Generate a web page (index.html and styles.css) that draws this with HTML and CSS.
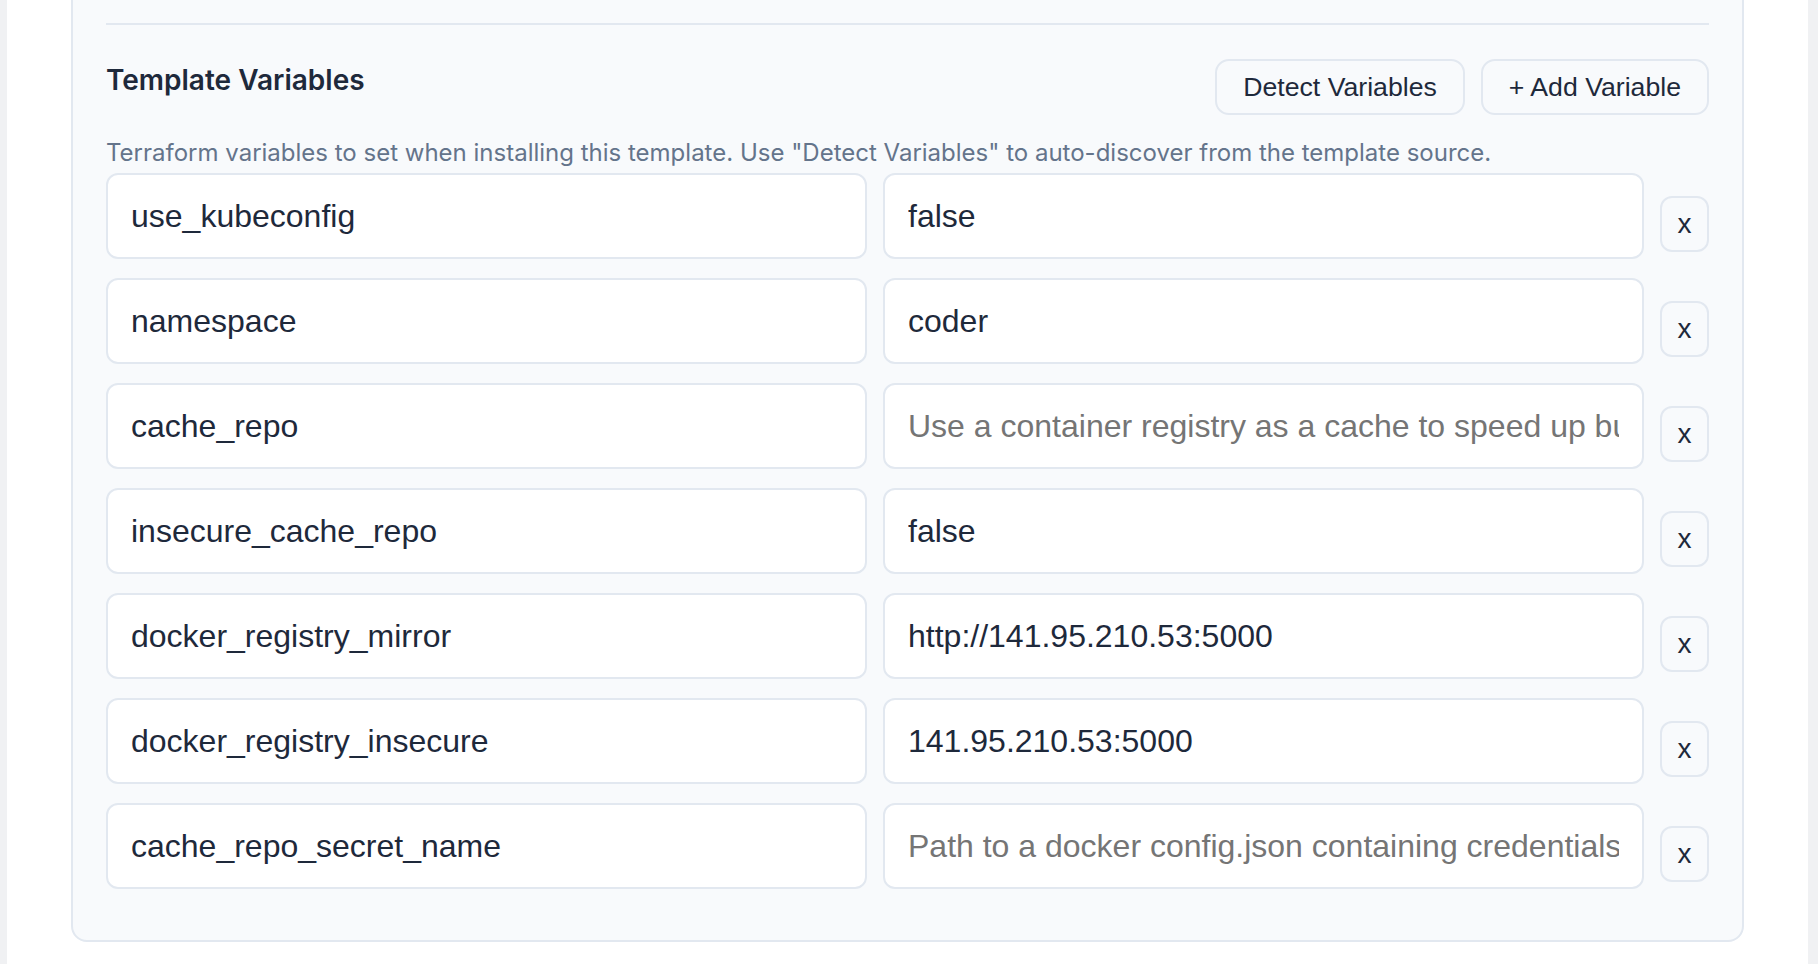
FILE: index.html
```html
<!DOCTYPE html>
<html lang="en">
<head>
    <meta charset="UTF-8">
    <meta name="viewport" content="width=device-width, initial-scale=1.0">
    <title>Template Variables</title>
    <link rel="stylesheet" href="styles.css">
</head>
<body>
    <div class="panel">
        <div class="card">
            <section class="variables">
                <div class="variables-header">
                    <h3>Template Variables</h3>
                    <div class="actions">
                        <button class="btn">Detect Variables</button>
                        <button class="btn">+ Add Variable</button>
                    </div>
                </div>
                <p class="hint">Terraform variables to set when installing this template. Use "Detect Variables" to auto-discover from the template source.</p>

                <div class="var-row">
                    <input class="var-input" type="text" value="use_kubeconfig">
                    <input class="var-input" type="text" value="false">
                    <button class="remove">x</button>
                </div>
                <div class="var-row">
                    <input class="var-input" type="text" value="namespace">
                    <input class="var-input" type="text" value="coder">
                    <button class="remove">x</button>
                </div>
                <div class="var-row">
                    <input class="var-input" type="text" value="cache_repo">
                    <input class="var-input" type="text" placeholder="Use a container registry as a cache to speed up builds.">
                    <button class="remove">x</button>
                </div>
                <div class="var-row">
                    <input class="var-input" type="text" value="insecure_cache_repo">
                    <input class="var-input" type="text" value="false">
                    <button class="remove">x</button>
                </div>
                <div class="var-row">
                    <input class="var-input" type="text" value="docker_registry_mirror">
                    <input class="var-input" type="text" value="http://141.95.210.53:5000">
                    <button class="remove">x</button>
                </div>
                <div class="var-row">
                    <input class="var-input" type="text" value="docker_registry_insecure">
                    <input class="var-input" type="text" value="141.95.210.53:5000">
                    <button class="remove">x</button>
                </div>
                <div class="var-row">
                    <input class="var-input" type="text" value="cache_repo_secret_name">
                    <input class="var-input" type="text" placeholder="Path to a docker config.json containing credentials to the registry.">
                    <button class="remove">x</button>
                </div>
            </section>
        </div>
    </div>
</body>
</html>
```

FILE: styles.css
```css
html, body {
    margin: 0;
}
body {
    background-color: #f0f1f3;
    font-family: Inter, 'Noto Sans', sans-serif;
    color: #1e293b;
    overflow: hidden;
}
.panel {
    display: flow-root;
    box-sizing: border-box;
    min-height: 100vh;
    margin: 0 10px 0 7px;
    padding: 0 64px;
    background-color: white;
}
.card {
    margin-top: -40px;
    background-color: #f8fafc;
    border: 2px solid #e2e8f0;
    border-radius: 16px;
    padding: 61px 33px 32px;
}
.variables {
    border-top: 2px solid #e2e8f0;
    padding-top: 34px;
}
.variables-header {
    display: flex;
    justify-content: space-between;
    align-items: flex-start;
    margin-bottom: 20px;
}
h3 {
    margin: 0;
    font-size: 28px;
    font-weight: 600;
    line-height: 42px;
    color: #1e293b;
}
.actions {
    display: flex;
    gap: 16px;
}
.btn {
    height: 56px;
    padding: 0 26px;
    border: 2px solid #e2e8f0;
    border-radius: 14px;
    background-color: #f8fafc;
    font-family: 'Liberation Sans', Arial, sans-serif;
    font-size: 26.67px;
    color: #1e293b;
}
.hint {
    margin: 0 0 2px;
    font-size: 24px;
    line-height: 36px;
    color: #64748b;
}
.var-row {
    display: flex;
    align-items: center;
    gap: 16px;
    margin-bottom: 4px;
}
.var-input {
    flex: 1;
    min-width: 0;
    height: 86px;
    box-sizing: border-box;
    margin: 0 0 15px;
    padding: 0 23px;
    border: 2px solid #e2e8f0;
    border-radius: 12px;
    background-color: white;
    font-family: 'Liberation Sans', Arial, sans-serif;
    font-size: 32px;
    color: #1e293b;
    outline: none;
}
.var-input::placeholder {
    color: #757575;
}
.remove {
    width: 49px;
    height: 56px;
    padding: 0;
    border: 2px solid #e2e8f0;
    border-radius: 12px;
    background-color: #f8fafc;
    font-family: 'Liberation Sans', Arial, sans-serif;
    font-size: 28px;
    color: #1e293b;
}
```
